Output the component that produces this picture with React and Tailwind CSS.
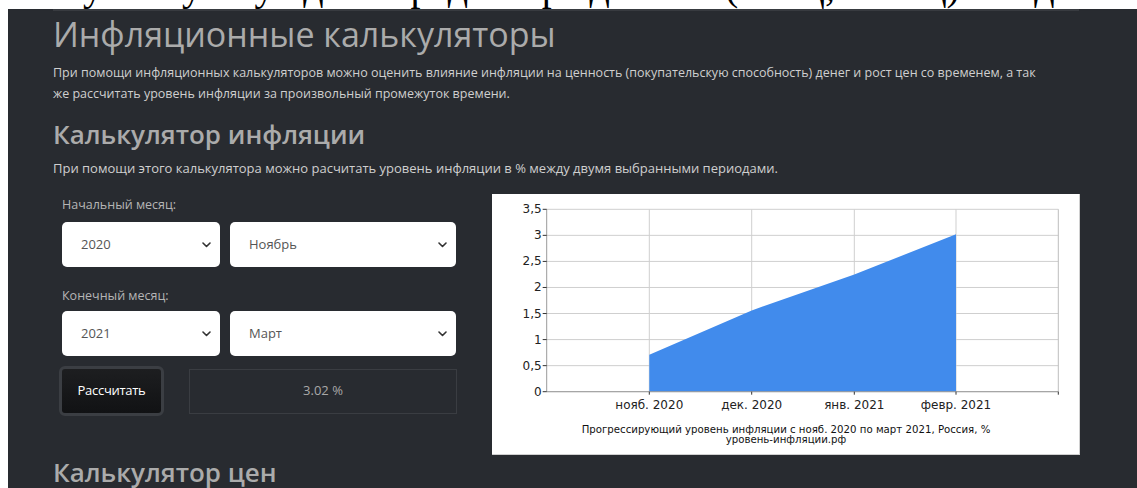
import React from 'react';

const font = { fontFamily: '"Open Sans", "Noto Sans", sans-serif' };

const Chevron = () => (
  <svg width="9" height="6" viewBox="0 0 9 6" className="shrink-0">
    <path d="M1 1l3.5 3.5L8 1" fill="none" stroke="#333" strokeWidth="1.6" strokeLinecap="round" strokeLinejoin="round" />
  </svg>
);

const Select = ({ value, className }) => (
  <div className={`h-[45px] bg-white rounded-[5px] flex items-center justify-between pl-[19px] pr-[9px] text-[13px] text-[#555] ${className}`}>
    <span>{value}</span>
    <Chevron />
  </div>
);

// inflation area chart, drawn to the pixel grid of the white box
const InflationChart = () => {
  const left = 54.7;
  const right = 566.3;
  const top = 15.3;
  const bottom = 197.7;
  const unit = (bottom - top) / 3.5;
  const yTicks = ['0', '0,5', '1', '1,5', '2', '2,5', '3', '3,5'];
  const xs = [157.3, 259.7, 362.3, 464];
  const months = ['нояб. 2020', 'дек. 2020', 'янв. 2021', 'февр. 2021'];
  const values = [0.71, 1.56, 2.25, 3.02];
  const y = (v) => bottom - v * unit;
  const area =
    `M${xs[0]},${bottom} ` +
    values.map((v, i) => `L${xs[i]},${y(v)}`).join(' ') +
    ` L${xs[3]},${bottom} Z`;

  return (
    <svg width="587" height="260" viewBox="0 0 587 260" style={{ fontFamily: '"DejaVu Sans", sans-serif' }}>
      <rect x="0" y="0" width="587" height="260" fill="#fff" />
      {yTicks.map((t, i) => (
        <line key={t} x1={left} x2={right} y1={y(i * 0.5)} y2={y(i * 0.5)} stroke="#cfcfcf" strokeWidth="1" />
      ))}
      {xs.map((x) => (
        <line key={x} x1={x} x2={x} y1={top} y2={bottom} stroke="#cfcfcf" strokeWidth="1" />
      ))}
      <line x1={right} x2={right} y1={top} y2={bottom} stroke="#bdbdbd" strokeWidth="1" />
      <path d={area} fill="#418bec" />
      <line x1={left} x2={left} y1={top} y2={bottom} stroke="#9a9a9a" strokeWidth="1" />
      <line x1={left} x2={right} y1={bottom} y2={bottom} stroke="#9a9a9a" strokeWidth="1" />
      {yTicks.map((t, i) => (
        <g key={t}>
          <line x1={left - 4} x2={left} y1={y(i * 0.5)} y2={y(i * 0.5)} stroke="#333" strokeWidth="1" />
          <text x={left - 5} y={y(i * 0.5) + 4} fontSize="12" textAnchor="end" fill="#222">{t}</text>
        </g>
      ))}
      {[...xs, right].map((x) => (
        <line key={x} x1={x} x2={x} y1={bottom} y2={bottom + 3} stroke="#333" strokeWidth="1" />
      ))}
      {xs.map((x, i) => (
        <text key={x} x={x} y="214.5" fontSize="12" textAnchor="middle" fill="#222">{months[i]}</text>
      ))}
      <text x="294" y="239" fontSize="10.2" textAnchor="middle" fill="#111">
        Прогрессирующий уровень инфляции с нояб. 2020 по март 2021, Россия, %
      </text>
      <text x="294" y="248.8" fontSize="10.2" textAnchor="middle" fill="#111">уровень-инфляции.рф</text>
    </svg>
  );
};

export default function App() {
  return (
    <div className="min-h-screen bg-white pl-2" style={font}>
      {/* tail of the page header that sits above the dark section */}
      <div className="h-[9px] overflow-hidden flex items-start">
        <div
          className="shrink-0 mt-[-33px] ml-[46px] text-[40px] leading-[40px] text-black whitespace-nowrap"
          style={{ fontFamily: '"Liberation Serif", serif' }}
        >
          Публикуем у одного редактора данные (ИПЦ, месяц) о годовой инфляции в России
        </div>
      </div>

      <div className="bg-[#282b30] min-h-[479px] overflow-hidden">
        <div className="ml-[45px] w-[1026px] h-[2px] bg-[#383b40]" />

        <div className="pl-[45px] w-[1078px]">
          <h1 className="mt-[3px] text-[34px] leading-[41px] text-[#ababab]">Инфляционные калькуляторы</h1>
          <p className="mt-[7px] text-[12.5px] leading-[21px] text-[#cfcfcf]">
            При помощи инфляционных калькуляторов можно оценить влияние инфляции на ценность (покупательскую способность) денег и рост цен со временем, а так
            <br />
            же рассчитать уровень инфляции за произвольный промежуток времени.
          </p>

          <h2 className="mt-[13px] text-[26px] leading-[34px] font-semibold text-[#ababab]">Калькулятор инфляции</h2>
          <p className="mt-[7px] text-[13px] leading-[21px] text-[#cfcfcf]">
            При помощи этого калькулятора можно расчитать уровень инфляции в % между двумя выбранными периодами.
          </p>

          <div className="flex items-start mt-[10px]">
            <div className="w-[447px] pl-[9px] pt-[7px]">
              <div className="text-[12.5px] leading-[18px] text-[#b5b5b5]">Начальный месяц:</div>
              <div className="flex gap-[10px] mt-[8px]">
                <Select value="2020" className="w-[158px]" />
                <Select value="Ноябрь" className="w-[226px]" />
              </div>
              <div className="mt-[20px] text-[12.5px] leading-[18px] text-[#b5b5b5]">Конечный месяц:</div>
              <div className="flex gap-[10px] mt-[6px]">
                <Select value="2021" className="w-[158px]" />
                <Select value="Март" className="w-[226px]" />
              </div>
              <div className="flex items-center mt-[10px] -ml-[3px]">
                <button className="w-[105px] h-[50px] rounded-[6px] border-[3px] border-[#3b3e43] bg-gradient-to-b from-[#1d1e20] to-[#111214] text-[13px] text-white tracking-[-0.3px]">
                  Рассчитать
                </button>
                <div className="ml-[25px] w-[268px] h-[45px] border border-[#3a3d42] flex items-center justify-center text-[13px] text-[#a8a8a8]">
                  3.02 %
                </div>
              </div>
            </div>
            <div className="mt-[5px] ml-[-8px] border-r border-b border-[#d0d0d0] bg-white">
              <InflationChart />
            </div>
          </div>

          <h2 className="mt-[0px] text-[26px] leading-[34px] font-semibold text-[#ababab]">Калькулятор цен</h2>
        </div>
      </div>
    </div>
  );
}
